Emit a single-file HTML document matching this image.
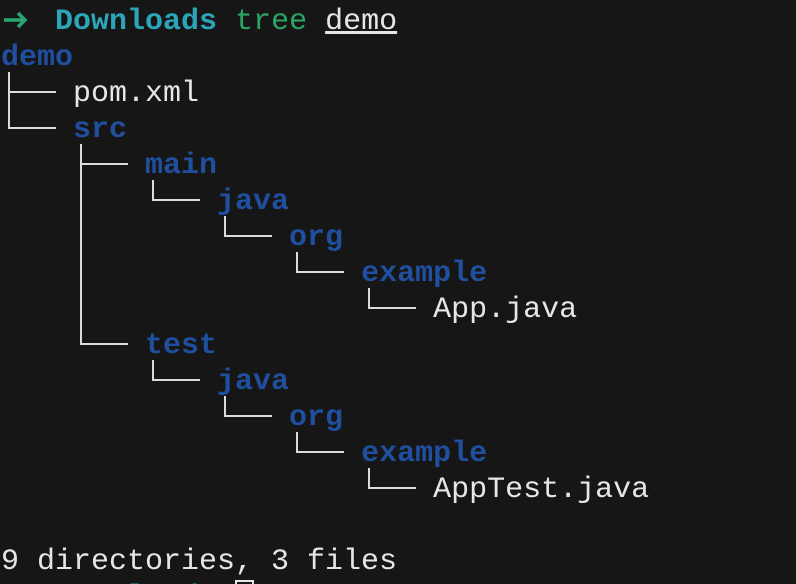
<!DOCTYPE html>
<html><head><meta charset="utf-8"><style>
html,body{margin:0;padding:0;background:#161616;width:796px;height:584px;overflow:hidden}
#w{position:relative;width:796px;height:584px;overflow:hidden}
pre{margin:0;position:absolute;left:1px;top:4px;height:580px;overflow:hidden;font-family:"Liberation Mono","DejaVu Sans Mono",monospace;font-size:30px;line-height:36px;color:#e6e6e6;letter-spacing:0}
.g{display:inline-block;width:18px;height:36px;vertical-align:top}
.t{color:#2aa6b8;font-weight:bold}
.c{color:#2ba564}
.u{text-decoration:underline}
.d{color:#1f4f9e;font-weight:bold}
.cur{display:inline-block;width:19px;height:32px;border:2px solid #e6e6e6;box-sizing:border-box;vertical-align:-7px}
.v,.h{position:absolute;background:#dcdcdc}
.v{width:2px}.h{height:2px;width:48px}
.ar{position:absolute;left:3px}
</style></head><body><div id="w"><pre><span class="g"></span>  <span class="t">Downloads</span> <span class="c">tree</span> <span class="u">demo</span>
<span class="d">demo</span>
    pom.xml
    <span class="d">src</span>
        <span class="d">main</span>
            <span class="d">java</span>
                <span class="d">org</span>
                    <span class="d">example</span>
                        App.java
        <span class="d">test</span>
            <span class="d">java</span>
                <span class="d">org</span>
                    <span class="d">example</span>
                        AppTest.java

9 directories, 3 files
<span class="g"></span>  <span class="t">Downloads</span> <span class="cur"></span></pre>
<svg class="ar" style="top:11px" width="26" height="18" viewBox="0 0 26 18"><path d="M1 9H22M15 2L22 9L15 16" stroke="#28a870" stroke-width="3.5" fill="none"/></svg>
<svg class="ar" style="top:587px" width="26" height="18" viewBox="0 0 26 18"><path d="M1 9H22M15 2L22 9L15 16" stroke="#28a870" stroke-width="3.5" fill="none"/></svg>
<div class="v" style="left:8px;top:72px;height:57px"></div>
<div class="h" style="left:8px;top:91px"></div>
<div class="h" style="left:8px;top:127px"></div>
<div class="v" style="left:80px;top:144px;height:201px"></div>
<div class="h" style="left:80px;top:163px"></div>
<div class="h" style="left:80px;top:343px"></div>
<div class="v" style="left:152px;top:180px;height:21px"></div><div class="h" style="left:152px;top:199px"></div>
<div class="v" style="left:224px;top:216px;height:21px"></div><div class="h" style="left:224px;top:235px"></div>
<div class="v" style="left:296px;top:252px;height:21px"></div><div class="h" style="left:296px;top:271px"></div>
<div class="v" style="left:368px;top:288px;height:21px"></div><div class="h" style="left:368px;top:307px"></div>
<div class="v" style="left:152px;top:360px;height:21px"></div><div class="h" style="left:152px;top:379px"></div>
<div class="v" style="left:224px;top:396px;height:21px"></div><div class="h" style="left:224px;top:415px"></div>
<div class="v" style="left:296px;top:432px;height:21px"></div><div class="h" style="left:296px;top:451px"></div>
<div class="v" style="left:368px;top:468px;height:21px"></div><div class="h" style="left:368px;top:487px"></div>
</div></body></html>
